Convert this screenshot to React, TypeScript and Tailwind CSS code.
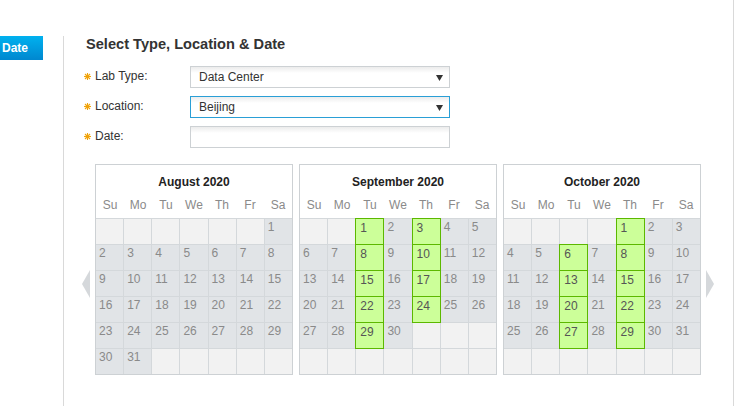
import React from 'react';

const DAYS = ['Su', 'Mo', 'Tu', 'We', 'Th', 'Fr', 'Sa'];

function Month({ title, start, count, green }: { title: string; start: number; count: number; green: number[] }) {
  const cells: (number | null)[] = [];
  for (let i = 0; i < 42; i++) {
    const d = i - start + 1;
    cells.push(d >= 1 && d <= count ? d : null);
  }
  return (
    <div className="w-[198px] border border-[#cdd1d4] bg-white">
      <div className="pt-[9px] h-[16px] box-content text-center text-[12px] leading-[16px] font-bold text-[#222]">{title}</div>
      <div className="mt-[2px] h-[26px] grid grid-cols-7 items-center text-center text-[12px] text-[#8a8a8a]">
        {DAYS.map((d) => (
          <div key={d}>{d}</div>
        ))}
      </div>
      <div className="grid grid-cols-7 grid-rows-[repeat(6,25px)] gap-px pt-px bg-[#d4d8db]">
        {cells.map((d, i) => {
          if (d === null) return <div key={i} className="bg-[#f2f2f2]" />;
          if (green.includes(d))
            return (
              <div key={i} className="relative z-10 bg-[#ccff99] shadow-[0_0_0_1px_#5cb800] pl-[4px] pt-[2px] text-[12px] leading-[14px] text-[#555]">
                {d}
              </div>
            );
          return (
            <div key={i} className="bg-[#e1e4e7] pl-[3px] pt-[1px] text-[12px] leading-[14px] text-[#8a8a8a]">
              {d}
            </div>
          );
        })}
      </div>
    </div>
  );
}

function Star() {
  return (
    <svg width="7" height="7" viewBox="0 0 7 7" className="shrink-0">
      <g stroke="#f0a30a" strokeWidth="1.1">
        <line x1="3.5" y1="0" x2="3.5" y2="7" />
        <line x1="0" y1="3.5" x2="7" y2="3.5" />
        <line x1="1" y1="1" x2="6" y2="6" />
        <line x1="6" y1="1" x2="1" y2="6" />
      </g>
    </svg>
  );
}

function Caret() {
  return (
    <svg width="7" height="7" viewBox="0 0 7 7" className="shrink-0">
      <polygon points="0,1 7,1 3.5,7" fill="#333" />
    </svg>
  );
}

function Row({ label, children }: { label: string; children: React.ReactNode }) {
  return (
    <div className="flex items-center h-[22px]">
      <div className="w-[106px] flex items-center -mt-[2px]">
        <Star />
        <span className="ml-[4px] text-[12px] text-[#333]">{label}</span>
      </div>
      {children}
    </div>
  );
}

export default function App() {
  return (
    <div className="w-[743px] h-[406px] bg-white overflow-hidden font-['Liberation_Sans',Arial,sans-serif]">
      <div className="flex h-full w-[734px] border-r border-[#d9d9d9]">
        <div className="w-[63px] shrink-0 pt-[36px]">
          <div className="w-[43px] h-[24px] bg-[linear-gradient(#00b1ef,#0087cf)] text-white font-bold text-[12px] leading-[24px] pl-[2px]">
            Date
          </div>
        </div>
        <div className="flex-1 mt-[36px] border-l border-[#d9d9d9]">
          <div className="ml-[22px] text-[14.6px] leading-[16px] font-bold text-[#333]">Select Type, Location &amp; Date</div>
          <div className="mt-[14px] ml-[20px] flex flex-col gap-[8px]">
            <Row label="Lab Type:">
              <div className="w-[260px] h-[22px] border border-[#cdd1d4] bg-[linear-gradient(#ececec,#ffffff_6px)] flex items-center pl-[8px] pr-[6px] text-[12px] text-[#333]">
                <span className="flex-1">Data Center</span>
                <Caret />
              </div>
            </Row>
            <Row label="Location:">
              <div className="w-[260px] h-[22px] border border-[#2a9fd6] bg-[linear-gradient(#ececec,#ffffff_6px)] flex items-center pl-[8px] pr-[6px] text-[12px] text-[#333]">
                <span className="flex-1">Beijing</span>
                <Caret />
              </div>
            </Row>
            <Row label="Date:">
              <div className="w-[260px] h-[22px] border border-[#cdd1d4] bg-[linear-gradient(#ececec,#ffffff_6px)]" />
            </Row>
          </div>
          <div className="mt-[16px] ml-[18px] flex items-start gap-[5px]">
            <svg width="8" height="28" viewBox="0 0 8 28" className="mt-[106px] shrink-0">
              <polygon points="8,0 0,14 8,28" fill="#d5d8db" />
            </svg>
            <div className="flex gap-[6px]">
              <Month title="August 2020" start={6} count={31} green={[]} />
              <Month title="September 2020" start={2} count={30} green={[1, 3, 8, 10, 15, 17, 22, 24, 29]} />
              <Month title="October 2020" start={4} count={31} green={[1, 6, 8, 13, 15, 20, 22, 27, 29]} />
            </div>
            <svg width="8" height="28" viewBox="0 0 8 28" className="mt-[106px] shrink-0">
              <polygon points="0,0 8,14 0,28" fill="#d5d8db" />
            </svg>
          </div>
        </div>
      </div>
    </div>
  );
}
